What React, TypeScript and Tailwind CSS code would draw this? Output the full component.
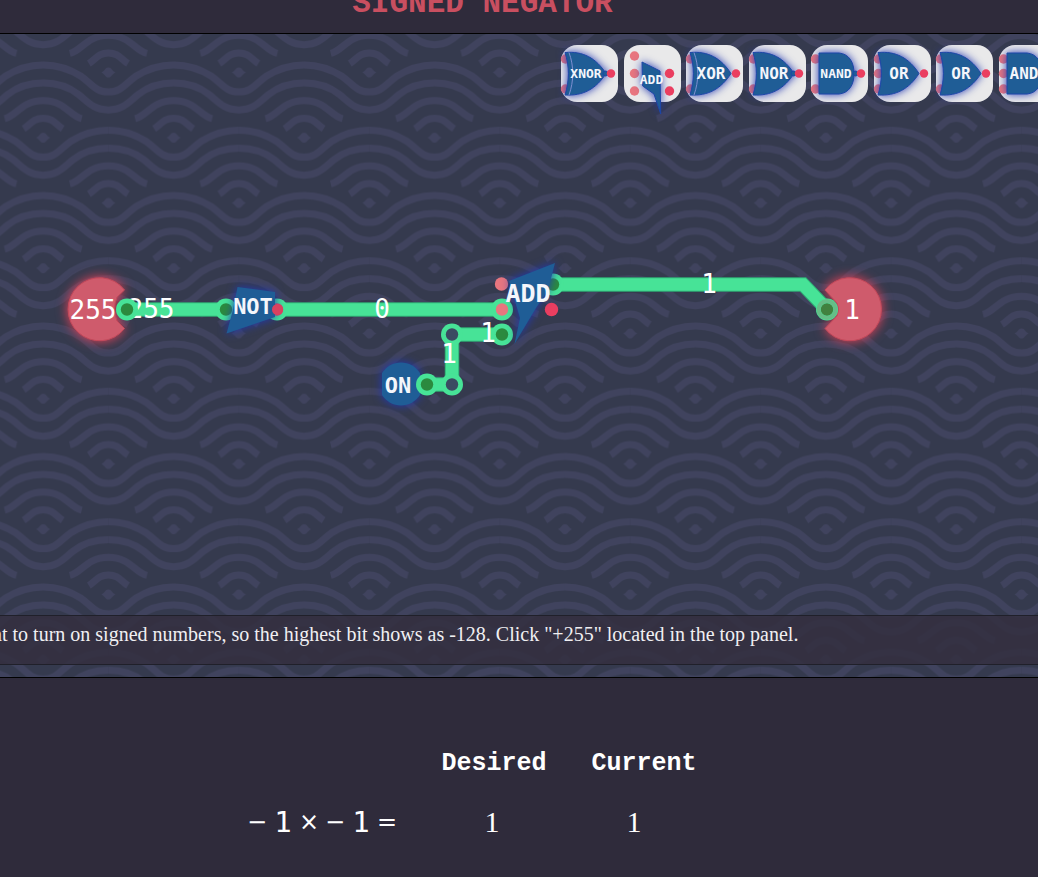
import type { ReactNode } from "react";

type Gate = {
  label: string;
  shape: "or" | "and" | "add";
  inputs: number[];
  exclusive?: boolean;
  inverted?: boolean;
};

const gates: Gate[] = [
  { label: "XNOR", shape: "or", inputs: [14, 44], exclusive: true, inverted: true },
  { label: "ADD", shape: "add", inputs: [11, 28.5, 46] },
  { label: "XOR", shape: "or", inputs: [14, 44], exclusive: true },
  { label: "NOR", shape: "or", inputs: [14, 44], inverted: true },
  { label: "NAND", shape: "and", inputs: [14, 44], inverted: true },
  { label: "OR", shape: "or", inputs: [14, 28.5, 44] },
  { label: "OR", shape: "or", inputs: [14, 44] },
  { label: "AND", shape: "and", inputs: [14, 28.5, 44] },
];

const heading = "font-['Liberation_Mono',monospace] font-bold";
const digits = "font-['DejaVu_Sans_Mono',monospace]";

function WavePattern() {
  return (
    <svg className="absolute inset-0 h-full w-full" aria-hidden="true">
      <defs>
        <pattern id="waves" width="130.45" height="130.5" x="43.2" y="103.7" patternUnits="userSpaceOnUse">
          <g fill="none" stroke="#40435e" strokeWidth="7">
            {[
              [0, 0],
              [130.45, 0],
              [65.2, 65.25],
              [-65.2, 65.25],
              [195.6, 65.25],
              [65.2, -65.25],
              [-65.2, -65.25],
              [195.6, -65.25],
              [0, 130.5],
              [130.45, 130.5],
            ].map(([x, y]) => (
              <g key={`${x},${y}`} transform={`translate(${x} ${y})`}>
                <path d="M-65.2-7.5C-50-7.5-38-3-27 4C-17 11-13 19.500 0 19.500S17 11 27 4C38-3 50-7.500 65.200-7.500" />
                <path d="M-65.2 10.500C-50 10.500-40 14-30 22C-21 29-15 37.500 0 37.500S21 29 30 22C40 14 50 10.500 65.200 10.500" />
                <path d="M-38.500-19C-26-22-22-37 0-37S26-22 38.500-19" />
                <path d="M-19.500-9C-13-13-10-19.500 0-19.500S13-13 19.500-9" />
                <path d="M-7 0C-3-2-3-5 0-5S3-2 7 0C3 2 3 5 0 5S-3 2-7 0Z" fill="#40435e" stroke="none" />
              </g>
            ))}
          </g>
        </pattern>
      </defs>
      <rect width="100%" height="100%" fill="url(#waves)" />
    </svg>
  );
}

function GateIcon({ gate }: { gate: Gate }) {
  const { label, shape, inputs, exclusive, inverted } = gate;
  const small = label.length === 4;
  const add = shape === "add";
  return (
    <svg viewBox="0 0 57 57" className="h-full w-full overflow-visible" aria-hidden="true">
      {inputs.map((y) => (
        <circle key={y} cx={add ? 10.5 : 4.5} cy={y} r="4.7" fill="#e8767f" />
      ))}
      <g className="drop-shadow-[0_0_4px_#2438b0]" fill="#1f5d96" stroke="#1d46a8" strokeWidth="1">
        {shape === "or" && <path d="M4 7.5C22 6 35 13 45 28.5C35 44 22 51 4 50C8.500 36 8.500 21 4 7.500Z" />}
        {shape === "and" && <path d="M8 8H28C38 9 43 17 43 28.500S38 48 28 49H8Z" />}
        {add && <path d="M18 17L36 26L36.700 69L30 49L18.700 41Z" />}
        {inverted && <circle cx="44.500" cy="28.500" r="2.500" />}
      </g>
      {exclusive && <path d="M8 7.500C13 21 13 36 8 50" fill="none" stroke="#7f8fd2" strokeWidth="1" />}
      <circle cx={add ? 45.5 : 50} cy="28.5" r={add ? 4.7 : 4.2} fill="#ea3e60" />
      {add && <circle cx="45.500" cy="46" r="4.700" fill="#ea3e60" />}
      <text
        x={add ? 27.5 : 25}
        y={add ? 39 : small ? 33 : 34}
        textAnchor="middle"
        fill="#f4f6fb"
        className={`${digits} font-bold ${small || add ? "text-[13px]" : "text-[16px]"}`}
      >
        {label}
      </text>
    </svg>
  );
}

function Port({ x, y, fill }: { x: number; y: number; fill: string }) {
  return (
    <g>
      <circle cx={x} cy={y} r="11" fill="#47e397" />
      <circle cx={x} cy={y} r="6.2" fill={fill} />
    </g>
  );
}

function Label({ x, y, children }: { x: number; y: number; children: ReactNode }) {
  return (
    <text x={x} y={y} textAnchor="middle" fill="#ffffff" className={`${digits} text-[26px]`}>
      {children}
    </text>
  );
}

function Circuit() {
  const green = "#2b8a3e";
  const pink = "#e8767f";
  return (
    <svg
      className="relative block h-[513px] w-full overflow-visible"
      role="img"
      aria-label="Signed negator circuit"
    >
      <g transform="translate(0 -102)">
        <g className="drop-shadow-[0_0_6px_#ef4258]" fill="#cf5b6c" stroke="#c44a5b" strokeWidth="1">
          <path d="M124.500 290A31.500 31.500 0 1 0 124.500 328.500L117 321Q112 309 117 297Z" />
          <path d="M825 290A31.500 31.500 0 1 1 825 328.500L837 316Q840 309 837 303Z" />
        </g>
        <g className="drop-shadow-[0_0_5px_#2038b8]" fill="#1f5d96">
          <path d="M382 373A22.500 22.500 0 0 1 420 373V395A22.500 22.500 0 0 1 382 395Z" />
        </g>
        {["M127 309.5H226", "M277 309.5H502", "M553 284.5H803L827 309.5", "M427 384.5H452V334.5H502"].map((d) => (
          <g key={d} fill="none">
            <path d={d} stroke="#2fae75" strokeWidth="14.500" />
            <path d={d} stroke="#47e397" strokeWidth="12.500" />
          </g>
        ))}
        <Port x={226} y={309.5} fill={green} />
        <Port x={277} y={309.5} fill="#ea3e60" />
        <Port x={553} y={284.5} fill={green} />
        <Port x={427} y={384.5} fill={green} />
        <Port x={452} y={334.5} fill="#3b4a62" />
        <Port x={452} y={384.5} fill="#3b4a62" />
        <circle cx="501.500" cy="284" r="6.700" fill={pink} />
        <Port x={502} y={309.5} fill={pink} />
        <Port x={502} y={334.5} fill={green} />
        <circle cx="551.500" cy="309.500" r="6.700" fill="#ea3e60" />
        <g className="drop-shadow-[0_0_5px_#2038b8]" fill="#1f5d96">
          <path d="M237.500 287L275 292L275 317L226.500 333.500L233 310Z" />
          <path d="M555 263L548 290L536 308L514.500 344L520 318L509 281Z" />
        </g>
        <circle cx="277.500" cy="309.500" r="5.500" fill="#d9415f" />
        <Label x={151} y={318}>255</Label>
        <Port x={127} y={309.5} fill={green} />
        <Port x={827} y={309.5} fill="#41813f" />
        <circle cx="827" cy="309.500" r="8.500" fill="none" stroke="#66bd87" strokeWidth="4" />
        <Label x={93} y={319}>255</Label>
        <Label x={382} y={318}>0</Label>
        <Label x={488} y={342}>1</Label>
        <Label x={449} y={363}>1</Label>
        <Label x={709} y={293}>1</Label>
        <Label x={852} y={319}>1</Label>
        <g fill="#f4f6fb" textAnchor="middle" className={`${digits} font-bold`}>
          <text x="253" y="314" className="text-[22px]">NOT</text>
          <text x="528" y="302" className="text-[25px]">ADD</text>
          <text x="398" y="393" className="text-[22px]">ON</text>
        </g>
      </g>
    </svg>
  );
}

const equation = [
  { symbol: "−", digit: false },
  { symbol: "1", digit: true },
  { symbol: "×", digit: false },
  { symbol: "−", digit: false },
  { symbol: "1", digit: true },
  { symbol: "=", digit: false },
];

export default function App() {
  return (
    <div className="min-h-screen overflow-hidden bg-[#2f2b3b] text-white">
      <header className="flex h-[34px] justify-center overflow-hidden border-b border-black pr-[73px]">
        <h1 className={`${heading} -mt-3 text-[31px] leading-8 text-[#c94f60]`}>SIGNED NEGATOR</h1>
      </header>

      <main className="relative overflow-hidden border-b border-black bg-[#353a4e] pt-[11px] pb-3">
        <WavePattern />
        <div className="relative z-10 -mr-[18px] ml-auto flex w-[495px] justify-between" role="toolbar" aria-label="Components">
          {gates.map((gate, i) => (
            <button
              key={i}
              type="button"
              aria-label={gate.label}
              className="h-[57px] w-[57px] shrink-0 rounded-2xl bg-[#e9e9ea]"
            >
              <GateIcon gate={gate} />
            </button>
          ))}
        </div>
        <Circuit />
        <p className="relative -ml-2 h-[50px] border-y border-[#20202a] bg-[#342f40]/85 pt-[6px] font-['Liberation_Serif',serif] text-[20px] leading-6 whitespace-nowrap text-[#f0eff2]">
          nt to turn on signed numbers, so the highest bit shows as -128. Click "+255" located in the top panel.
        </p>
      </main>

      <section className="pt-[70px] pl-[244px]">
        <table className="table-fixed border-collapse">
          <colgroup>
            <col className="w-[175px]" />
            <col className="w-[150px]" />
            <col className="w-[150px]" />
          </colgroup>
          <thead>
            <tr className={`${heading} text-[25px] leading-8`}>
              <td />
              <th scope="col">Desired</th>
              <th scope="col">Current</th>
            </tr>
          </thead>
          <tbody>
            <tr className="align-top">
              <th scope="row" className="pt-6 font-normal">
                <span className="flex items-center leading-9">
                  {equation.map(({ symbol, digit }, i) => (
                    <span
                      key={i}
                      className={`w-[26px] text-center ${digit ? "font-['DejaVu_Sans_Mono',monospace] text-[29px]" : "font-['DejaVu_Sans',sans-serif] text-[24px]"}`}
                    >
                      {symbol}
                    </span>
                  ))}
                </span>
              </th>
              <td className="pt-6 pr-1 text-center font-['Liberation_Serif',serif] text-[30px] leading-9">1</td>
              <td className="pt-6 pr-5 text-center font-['Liberation_Serif',serif] text-[30px] leading-9">1</td>
            </tr>
          </tbody>
        </table>
      </section>
    </div>
  );
}
